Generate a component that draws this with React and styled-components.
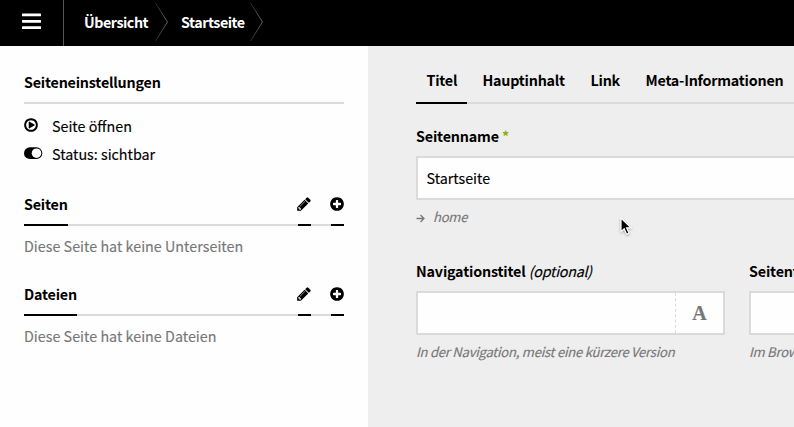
import React from "react";
import styled, { createGlobalStyle } from "styled-components";

const GlobalStyle = createGlobalStyle`
  *, *::before, *::after { box-sizing: border-box; }
  body {
    margin: 0;
    overflow: hidden;
    background: #fefefe;
    color: #000;
    font: 400 14.3px/20px "Noto Sans CJK SC", "Open Sans", sans-serif;
    -webkit-text-stroke: 0.15px;
    white-space: nowrap;
  }
`;

const Page = styled.div`
  position: relative;
  display: flex;
  flex-direction: column;
  width: 794px;
  height: 427px;
  overflow: hidden;
`;

const Topbar = styled.header`
  display: flex;
  flex: none;
  height: 46px;
  background: #000;
  color: #fff;
`;

const MenuButton = styled.div`
  width: 64px;
  padding: 13px 0 0 22px;
  border-right: 1px solid #555;
  svg { display: block; }
`;

const Crumb = styled.div`
  display: flex;
  width: ${(p) => p.$width}px;
  padding-left: ${(p) => p.$pad}px;
  justify-content: space-between;
  font-weight: 700;
  letter-spacing: -0.48px;
  line-height: 44px;
  -webkit-text-stroke: 0;
`;

const Body = styled.div`
  display: flex;
  flex: 1;
  min-height: 0;
`;

const Sidebar = styled.aside`
  flex: none;
  width: 368px;
  padding: 26px 24px 0;
  background: #fefefe;
`;

const Heading = styled.h2`
  display: flex;
  height: 32px;
  margin: 0;
  border-bottom: 2px solid #dadada;
  font-size: inherit;
  font-weight: 700;
  letter-spacing: -0.2px;
  -webkit-text-stroke: 0;
`;

const HeadingLabel = styled.span`
  width: ${(p) => p.$width}px;
  height: 32px;
  margin-right: auto;
  border-bottom: ${(p) => (p.$underlined ? "2px solid #000" : "0")};
`;

const HeadingAction = styled.span`
  display: flex;
  justify-content: center;
  width: 13px;
  height: 32px;
  margin-left: 20px;
  padding-top: 2px;
  border-bottom: 2px solid #000;
  svg { flex: none; margin-left: -1px; }
`;

const Options = styled.div`
  padding-top: 12px;
  height: 90px;
`;

const Option = styled.div`
  display: flex;
  height: 28px;
  svg { flex: none; }
`;

const OptionIcon = styled.span`
  width: 28px;
  padding-top: ${(p) => p.$drop}px;
  svg { display: block; margin-left: ${(p) => p.$shift || 0}px; }
`;

const Section = styled.section`
  height: 90px;
`;

const Muted = styled.p`
  margin: 0;
  padding-top: 10px;
  color: #777;
  letter-spacing: 0.02px;
`;

const Main = styled.main`
  flex: 1;
  min-width: 0;
  padding: 24px 0 0 48px;
  overflow: hidden;
  background: #eee;
`;

const Form = styled.div`
  width: 642px;
`;

const Tabs = styled.nav`
  display: flex;
  gap: 5px;
  height: 34px;
  border-bottom: 2px solid #dadada;
  font-weight: 700;
  letter-spacing: -0.22px;
  -webkit-text-stroke: 0;
`;

const Tab = styled.span`
  width: ${(p) => p.$width}px;
  height: 34px;
  padding-left: 10.5px;
  border-bottom: ${(p) => (p.$active ? "2px solid #000" : "0")};
`;

const Row = styled.div`
  display: flex;
  gap: 24px;
  height: 135px;
  padding-top: 22px;
`;

const Field = styled.div`
  flex: 1;
`;

const Label = styled.label`
  display: block;
  height: 30px;
  font-weight: 700;
  letter-spacing: -0.17px;
  -webkit-text-stroke: 0;
`;

const Required = styled.span`
  color: #8dae10;
`;

const Optional = styled.i`
  font-weight: 400;
  letter-spacing: -0.25px;
  -webkit-text-stroke: 0.15px;
`;

const Input = styled.div`
  display: flex;
  justify-content: space-between;
  height: 44px;
  padding-left: 8.5px;
  border: 2px solid #dadada;
  background: #fefefe;
  line-height: 40px;
`;

const InputAddon = styled.span`
  width: 48px;
  border-left: 1px dashed #dadada;
  color: #777;
  font: 700 20px/41px "Liberation Serif", serif;
  text-align: center;
`;

const Help = styled.div`
  display: flex;
  align-items: center;
  padding-top: 7px;
  color: #777;
  font-size: 13.1px;
  font-style: italic;
  letter-spacing: -0.26px;
  svg { margin: 2px 8px 0 0; }
`;

const Pointer = styled.svg`
  position: absolute;
  left: 619px;
  top: 216px;
  filter: drop-shadow(0 1px 1px rgba(0, 0, 0, 0.3));
`;

const circle =
  "M1664 896q0 209-103 385.5t-279.5 279.5-385.5 103-385.5-103-279.5-279.5-103-385.5 103-385.5 279.5-279.5 385.5-103 385.5 103 279.5 279.5 103 385.5z";

const ICONS = {
  pencil:
    "M491 1536l91-91-235-235-91 91v107h128v128h107zm523-928q0-22-22-22-10 0-17 7l-542 542q-7 7-7 17 0 22 22 22 10 0 17-7l542-542q7-7 7-17zm-54-192l416 416-832 832h-416v-416zm683 96q0 53-37 90l-166 166-416-416 166-165q36-38 90-38 53 0 91 38l235 234q37 39 37 91z",
  plus:
    "M1344 960v-128q0-26-19-45t-45-19h-256v-256q0-26-19-45t-45-19h-128q-26 0-45 19t-19 45v256h-256q-26 0-45 19t-19 45v128q0 26 19 45t45 19h256v256q0 26 19 45t45 19h128q26 0 45-19t19-45v-256h256q26 0 45-19t19-45z" + circle,
  play:
    "M1312 896q0 37-32 55l-544 320q-15 9-32 9-16 0-32-8-32-19-32-56v-640q0-37 32-56 33-18 64 1l544 320q32 18 32 55zM1440 896q0-148-73-273t-198-198-273-73-273 73-198 198-73 273 73 273 198 198 273 73 273-73 198-198 73-273z" + circle,
};

const Icon = ({ name }) => (
  <svg width="16" height="16" viewBox="0 0 1792 1792">
    <path fillRule="evenodd" d={ICONS[name]} />
  </svg>
);

const Chevron = ({ id }) => (
  <svg width="14" height="46" viewBox="0 0 14 46" fill="none">
    <defs>
      <linearGradient id={id} x1="0" y1="0" x2="0" y2="46" gradientUnits="userSpaceOnUse">
        <stop offset="0.04" stopColor="#222" />
        <stop offset="0.48" stopColor="#666" />
        <stop offset="0.92" stopColor="#222" />
      </linearGradient>
    </defs>
    <path d="M0.5 3L12.5 22L0.5 41" stroke={`url(#${id})`} />
  </svg>
);

const ToggleIcon = () => (
  <svg width="19" height="13" viewBox="0 0 19 13">
    <rect y="0.3" width="18.3" height="11.8" rx="5.9" />
    <circle cx="12.5" cy="6.2" r="4.8" fill="#fefefe" />
  </svg>
);

const ArrowIcon = () => (
  <svg width="9" height="9" viewBox="0 0 9 9" fill="none" stroke="#777" strokeWidth="1.3">
    <path d="M0.5 4.5H8M4.5 1L8 4.5L4.5 8" />
  </svg>
);

const List = ({ title, width, children }) => (
  <Section>
    <Heading>
      <HeadingLabel $width={width} $underlined>{title}</HeadingLabel>
      <HeadingAction><Icon name="pencil" /></HeadingAction>
      <HeadingAction><Icon name="plus" /></HeadingAction>
    </Heading>
    <Muted>{children}</Muted>
  </Section>
);

export default function App() {
  return (
    <Page>
      <GlobalStyle />
      <Topbar>
        <MenuButton>
          <svg width="19" height="16" viewBox="0 0 19 16" fill="#fff">
            <rect y="0.6" width="19" height="2.7" rx="0.6" />
            <rect y="7" width="19" height="2.7" rx="0.6" />
            <rect y="13.3" width="19" height="2.7" rx="0.6" />
          </svg>
        </MenuButton>
        <Crumb $width={105} $pad={20}>Übersicht<Chevron id="fadeA" /></Crumb>
        <Crumb $width={95} $pad={12}>Startseite<Chevron id="fadeB" /></Crumb>
      </Topbar>
      <Body>
        <Sidebar>
          <Heading><HeadingLabel $width={140}>Seiteneinstellungen</HeadingLabel></Heading>
          <Options>
            <Option><OptionIcon $drop={1} $shift={-1}><Icon name="play" /></OptionIcon>Seite öffnen</Option>
            <Option><OptionIcon $drop={3}><ToggleIcon /></OptionIcon>Status: sichtbar</Option>
          </Options>
          <List title="Seiten" width={44}>Diese Seite hat keine Unterseiten</List>
          <List title="Dateien" width={53}>Diese Seite hat keine Dateien</List>
        </Sidebar>
        <Main>
          <Form>
            <Tabs>
              <Tab $width={51} $active>Titel</Tab>
              <Tab $width={103}>Hauptinhalt</Tab>
              <Tab $width={50}>Link</Tab>
              <Tab $width={158}>Meta-Informationen</Tab>
            </Tabs>
            <Row>
              <Field>
                <Label>Seitenname <Required>*</Required></Label>
                <Input>Startseite</Input>
                <Help><ArrowIcon />home</Help>
              </Field>
            </Row>
            <Row>
              <Field>
                <Label>Navigationstitel <Optional>(optional)</Optional></Label>
                <Input><span /><InputAddon>A</InputAddon></Input>
                <Help>In der Navigation, meist eine kürzere Version</Help>
              </Field>
              <Field>
                <Label>Seitentitel <Optional>(optional)</Optional></Label>
                <Input />
                <Help>Im Browser-Tab sichtbar</Help>
              </Field>
            </Row>
          </Form>
        </Main>
      </Body>
      <Pointer width="14" height="22" viewBox="0 0 14 22">
        <path d="M2 2V15.6L5.2 12.7L7.6 18.2L10 17.1L7.6 11.8H12Z" fill="#000" stroke="#fff" strokeWidth="1.2" />
      </Pointer>
    </Page>
  );
}
